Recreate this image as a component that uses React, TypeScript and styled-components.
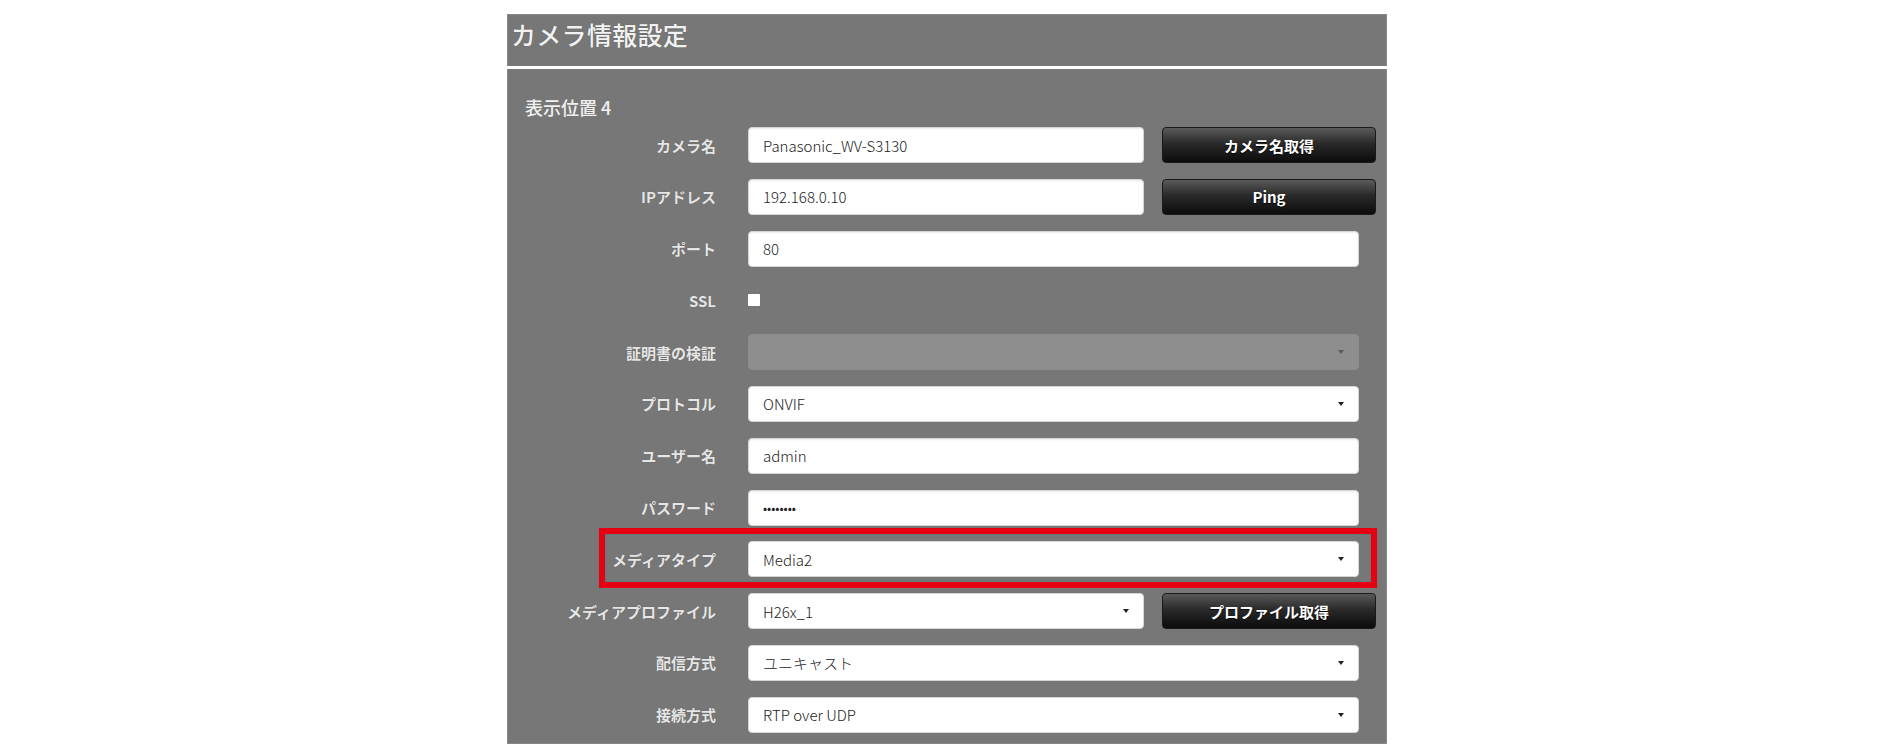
import styled, { createGlobalStyle } from "styled-components";

const GlobalStyle = createGlobalStyle`
  html, body {
    margin: 0;
    padding: 0;
    background: #ffffff;
  }
  body {
    font-family: "Noto Sans CJK JP", "Noto Sans", sans-serif;
  }
`;

type Field = {
  label: string;
  kind: "text" | "password" | "select" | "disabled" | "checkbox";
  value?: string;
  short?: boolean;
  button?: string;
  highlight?: boolean;
};

const fields: Field[] = [
  { label: "カメラ名", kind: "text", value: "Panasonic_WV-S3130", short: true, button: "カメラ名取得" },
  { label: "IPアドレス", kind: "text", value: "192.168.0.10", short: true, button: "Ping" },
  { label: "ポート", kind: "text", value: "80" },
  { label: "SSL", kind: "checkbox" },
  { label: "証明書の検証", kind: "disabled" },
  { label: "プロトコル", kind: "select", value: "ONVIF" },
  { label: "ユーザー名", kind: "text", value: "admin" },
  { label: "パスワード", kind: "password", value: "password" },
  { label: "メディアタイプ", kind: "select", value: "Media2", highlight: true },
  { label: "メディアプロファイル", kind: "select", value: "H26x_1", short: true, button: "プロファイル取得" },
  { label: "配信方式", kind: "select", value: "ユニキャスト" },
  { label: "接続方式", kind: "select", value: "RTP over UDP" },
];

const App = () => {
  return (
    <>
      <GlobalStyle />
      <Page>
        <Panel>
          <Header>
            <Title>カメラ情報設定</Title>
          </Header>
          <Body>
            <SectionTitle>表示位置 4</SectionTitle>
            <Rows>
              {fields.map((f) => (
                <Row key={f.label}>
                  <Label>{f.label}</Label>
                  <Control>
                    {f.kind === "text" && (
                      <TextInput type="text" defaultValue={f.value} $short={f.short} readOnly />
                    )}
                    {f.kind === "password" && (
                      <TextInput type="password" defaultValue={f.value} readOnly />
                    )}
                    {f.kind === "checkbox" && <Check type="checkbox" />}
                    {f.kind === "select" && (
                      <SelectBox $short={f.short}>{f.value}</SelectBox>
                    )}
                    {f.kind === "disabled" && <SelectBox $disabled />}
                    {f.button && <DarkButton>{f.button}</DarkButton>}
                  </Control>
                  {/* 強調表示の赤枠 */}
                  {f.highlight && <Highlight />}
                </Row>
              ))}
            </Rows>
          </Body>
        </Panel>
      </Page>
    </>
  );
};

const Page = styled.div`
  padding: 14px 0 9px 507px;
`;

const Panel = styled.div`
  width: 880px;
`;

const Header = styled.div`
  height: 52px;
  background: #777777;
  border: 1px solid #888;
  border-bottom: none;
  box-sizing: border-box;
  margin-bottom: 3px;
  display: flex;
  align-items: center;
  padding: 0 0 13px 3px;
`;

const Title = styled.h1`
  margin: 0;
  font-size: 25px;
  font-weight: 500;
  color: #f2f2f2;
  letter-spacing: 0.3px;
  text-shadow: 0 0 1px rgba(0, 0, 0, 0.3);
`;

const Body = styled.div`
  background: #777777;
  border: 1px solid #888;
  border-top: none;
  box-sizing: border-box;
  height: 675px;
  padding-top: 26px;
`;

const SectionTitle = styled.h2`
  margin: 0 0 8px 17px;
  font-size: 18px;
  line-height: 24px;
  font-weight: 500;
  color: #f0f0f0;
`;

const Rows = styled.div`
  display: flex;
  flex-direction: column;
  gap: 15.8px;
`;

const Row = styled.div`
  position: relative;
  display: grid;
  grid-template-columns: 240px 1fr;
  align-items: center;
  height: 36px;
`;

const Label = styled.div`
  text-align: right;
  padding-right: 32px;
  font-size: 15px;
  font-weight: 700;
  color: #e6e6e6;
  text-shadow: 0 0 1px rgba(0, 0, 0, 0.35);
  white-space: nowrap;
`;

const Control = styled.div`
  display: flex;
  align-items: center;
  gap: 18px;
`;

const TextInput = styled.input<{ $short?: boolean }>`
  box-sizing: border-box;
  width: ${(p) => (p.$short ? "396px" : "611px")};
  height: 36px;
  padding: 0 14px;
  border: 1px solid #d6d6d6;
  border-radius: 4px;
  background: #ffffff;
  box-shadow: inset 0 1px 2px rgba(0, 0, 0, 0.08);
  font-family: "Noto Sans CJK JP", "Noto Sans", sans-serif;
  font-size: 15px;
  font-weight: 300;
  color: #222;
  outline: none;

  &[type="password"] {
    font-size: 13px;
    letter-spacing: 0;
  }
`;

const SelectBox = styled.div<{ $short?: boolean; $disabled?: boolean }>`
  position: relative;
  box-sizing: border-box;
  width: ${(p) => (p.$short ? "396px" : "611px")};
  height: 36px;
  padding: 0 14px;
  display: flex;
  align-items: center;
  border: 1px solid ${(p) => (p.$disabled ? "#8c8c8c" : "#d6d6d6")};
  border-radius: 4px;
  background: ${(p) => (p.$disabled ? "#8e8e8e" : "#ffffff")};
  font-size: 15px;
  font-weight: 300;
  color: #222;

  &::after {
    content: "";
    position: absolute;
    right: 14px;
    top: 50%;
    margin-top: -2px;
    border-left: 3.5px solid transparent;
    border-right: 3.5px solid transparent;
    border-top: 4px solid ${(p) => (p.$disabled ? "#5a5a5a" : "#222")};
  }
`;

const Check = styled.input`
  appearance: none;
  margin: 0;
  width: 12px;
  height: 12px;
  border-radius: 1px;
  background: #ffffff;
  border: none;
`;

const DarkButton = styled.button`
  box-sizing: border-box;
  width: 214px;
  height: 36px;
  border: 1px solid #1a1a1a;
  border-radius: 4px;
  background: linear-gradient(to bottom, #5a5a5a 0%, #2a2a2a 45%, #0c0c0c 100%);
  color: #ffffff;
  font-family: "Noto Sans CJK JP", "Noto Sans", sans-serif;
  font-size: 15px;
  font-weight: 700;
  text-shadow: 0 1px 1px #000;
  cursor: pointer;
`;

const Highlight = styled.div`
  position: absolute;
  left: 91px;
  top: -13px;
  width: 778px;
  height: 60px;
  box-sizing: border-box;
  border: 6px solid #e60012;
  box-shadow: inset 0 0 0 1px rgba(70, 130, 130, 0.55);
  pointer-events: none;
`;

export default App;
